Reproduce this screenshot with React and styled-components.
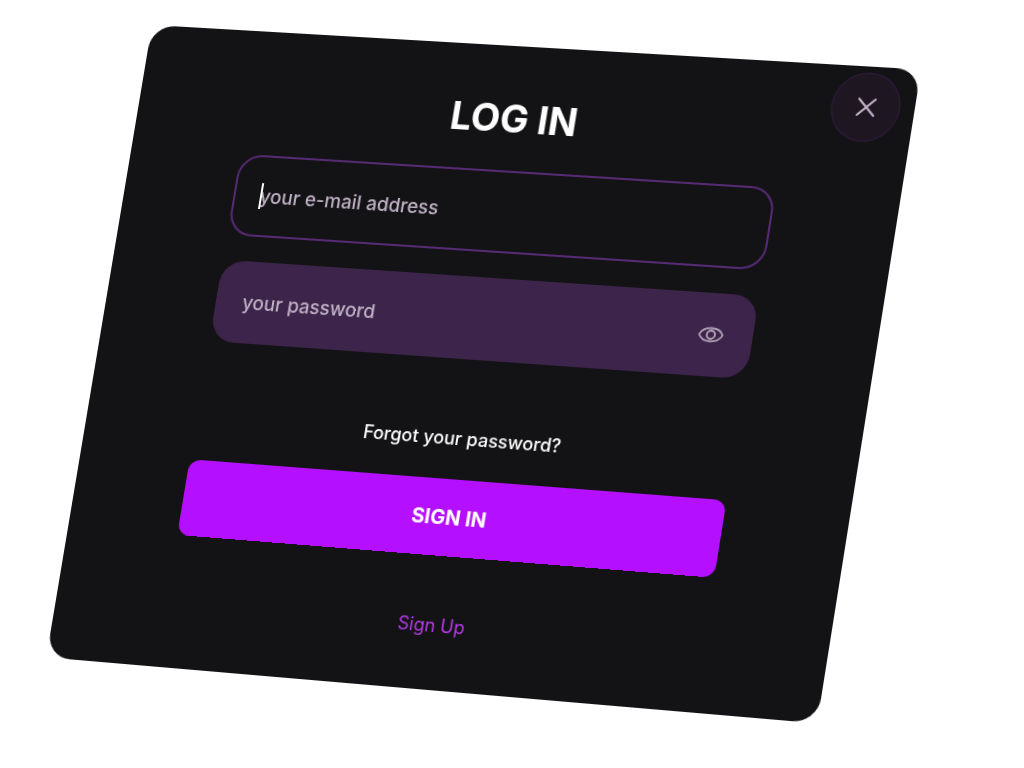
import React, { useState } from 'react';
import styled, { createGlobalStyle } from 'styled-components';

const GlobalStyle = createGlobalStyle`
  *, *::before, *::after {
    box-sizing: border-box;
  }

  body {
    margin: 0;
    background: #fff;
    font-family: Inter, 'Open Sans', sans-serif;
  }
`

const Page = styled.main`
  display: flex;
  align-items: flex-start;
  justify-content: center;
  min-height: 100vh;
  padding: 64px 0 0;
  overflow: hidden;
`

const Card = styled.section`
  position: relative;
  width: 100%;
  max-width: 770px;
  padding: 48px 121px 51px 112px;
  border-radius: 24px;
  outline: 1px solid transparent;
  background: #131315;
  transform-origin: 0 0;
  will-change: transform;
  transform: matrix3d(
    0.96557, 0.05757, 0, -0.00004184,
    -0.16433, 0.98191, 0, -0.00001024,
    0, 0, 1, 0,
    25, -39, 0, 1
  );
`

const CloseButton = styled.button`
  position: absolute;
  top: 6px;
  right: 14px;
  display: flex;
  align-items: center;
  justify-content: center;
  width: 67px;
  height: 68px;
  padding: 0;
  border: 1px solid #341c42;
  border-radius: 50%;
  background: #1e1722;
  color: #c4b6ca;
  cursor: pointer;
`

const Form = styled.form`
  display: flex;
  flex-direction: column;
`

const Title = styled.h1`
  margin: 0 0 28px;
  color: #fff;
  font-size: 38px;
  font-weight: 700;
  line-height: 48px;
  text-align: center;
`

const Fields = styled.div`
  display: flex;
  flex-direction: column;
  gap: 25px;
`

const Field = styled.label`
  position: relative;
  display: flex;
  align-items: center;
  height: 82px;
  padding: 0 26px 0 25px;
  border: 2px solid ${props => props.$active ? '#572a75' : '#3d244a'};
  border-radius: 24px;
  background: ${props => props.$active ? 'transparent' : '#3d244a'};
`

const Input = styled.input`
  flex: 1;
  min-width: 0;
  padding: 2px 0 0;
  border: 0;
  outline: 0;
  background: transparent;
  caret-color: transparent;
  color: #fff;
  font-family: inherit;
  font-size: 19px;
  font-weight: 500;
  line-height: 28px;

  &::placeholder {
    color: #bfb1c5;
    opacity: 1;
  }
`

const Caret = styled.span`
  position: absolute;
  left: 25px;
  width: 2px;
  height: 26px;
  background: #fff;
`

const EyeButton = styled.button`
  display: flex;
  padding: 0;
  border: 0;
  background: transparent;
  color: #b4a5bb;
  cursor: pointer;
`

const Link = styled.a`
  align-self: center;
  color: ${props => props.$accent ? '#b63ae6' : '#fff'};
  font-size: 18px;
  font-weight: ${props => props.$accent ? 400 : 500};
  line-height: 24px;
  text-decoration: none;
`

const ForgotLink = styled(Link)`
  margin: 67px 0 28px;
`

const SubmitButton = styled.button`
  height: 76px;
  margin-bottom: 57px;
  border: 0;
  border-radius: 12px;
  background: #b40fff;
  color: #fff;
  font-family: inherit;
  font-size: 20px;
  font-weight: 700;
  cursor: pointer;
`

const CloseIcon = () => (
  <svg width="20" height="20" viewBox="0 0 20 20" fill="none" stroke="currentColor" strokeWidth="2" strokeLinecap="round" aria-hidden="true">
    <path d="M2 2 18 18M18 2 2 18" />
  </svg>
)

const EyeIcon = () => (
  <svg width="26" height="26" viewBox="0 0 26 26" fill="none" stroke="currentColor" strokeWidth="1.8" aria-hidden="true">
    <path d="M1.5 13C3.2 9.2 7.6 6.5 13 6.5s9.8 2.7 11.5 6.5c-1.7 3.8-6.1 6.5-11.5 6.5S3.2 16.8 1.5 13z" strokeLinejoin="round" />
    <circle cx="13" cy="13" r="4" />
  </svg>
)

function App() {
  const [email, setEmail] = useState('');
  const [password, setPassword] = useState('');
  const [visible, setVisible] = useState(false);

  return (
    <>
      <GlobalStyle />
      <Page>
        <Card>
          <CloseButton type="button" aria-label="Close">
            <CloseIcon />
          </CloseButton>

          <Form onSubmit={(e) => e.preventDefault()}>
            <Title>LOG IN</Title>

            <Fields>
              <Field $active>
                {!email && <Caret />}
                <Input
                  type="email"
                  aria-label="your e-mail address"
                  placeholder="your e-mail address"
                  value={email}
                  onChange={(e) => setEmail(e.target.value)}
                />
              </Field>
              <Field>
                <Input
                  type={visible ? 'text' : 'password'}
                  aria-label="your password"
                  placeholder="your password"
                  value={password}
                  onChange={(e) => setPassword(e.target.value)}
                />
                <EyeButton type="button" aria-label="Show password" onClick={() => setVisible(!visible)}>
                  <EyeIcon />
                </EyeButton>
              </Field>
            </Fields>

            <ForgotLink href="#forgot">Forgot your password?</ForgotLink>
            <SubmitButton type="submit">SIGN IN</SubmitButton>
            <Link href="#signup" $accent>Sign Up</Link>
          </Form>
        </Card>
      </Page>
    </>
  )
}

export default App;
